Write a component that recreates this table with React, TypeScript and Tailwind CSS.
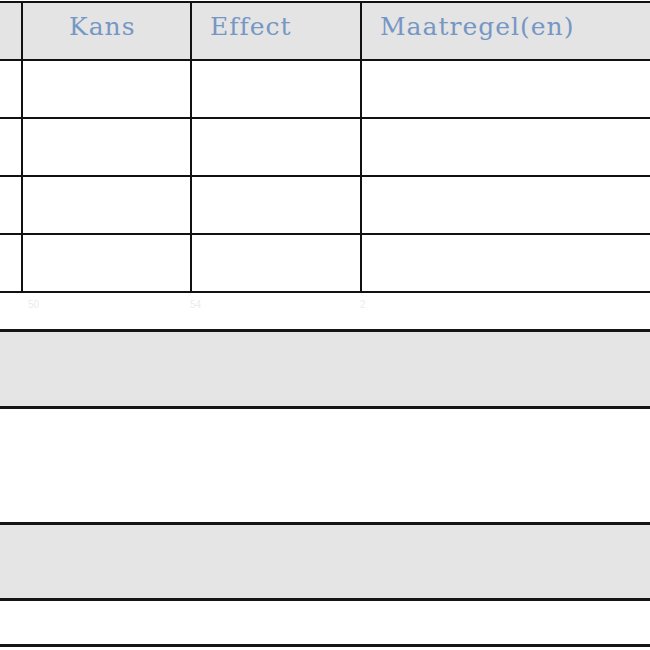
const headers = ["", "Kans", "Effect", "Maatregel(en)"];
const rows = [0, 1, 2, 3];

function HeaderCell({ label, index }: { label: string; index: number }) {
  return (
    <div
      className={
        "flex h-[56px] items-start bg-[#e4e4e4] pt-[9px] font-['DejaVu_Serif',serif] text-[25px] leading-[30px] tracking-[1px] text-[#7697c4] " +
        (index === 1 ? "pl-[46px]" : "pl-[18px]")
      }
    >
      {label}
    </div>
  );
}

export default function App() {
  return (
    <div className="h-[650px] w-[650px] overflow-hidden bg-white">
      {/* risk table */}
      <div className="mt-[1px] grid grid-cols-[21px_167px_168px_1fr] gap-[2px] border-y-2 border-[#111] bg-[#111]">
        {headers.map((h, i) => (
          <HeaderCell key={i} label={h} index={i} />
        ))}
        {rows.map((r) =>
          headers.map((_, c) => (
            <div key={`${r}-${c}`} className="h-[56px] bg-white" />
          ))
        )}
      </div>

      <div className="flex h-[36px] pl-[28px] pt-[4px] font-['Liberation_Sans',sans-serif] text-[10px] text-[#ececec]">
        <span className="w-[162px]">50</span>
        <span className="w-[170px]">54</span>
        <span>2</span>
      </div>

      <div className="h-[80px] border-y-[3px] border-[#151515] bg-[#e5e5e6]" />
      <div className="h-[113px] bg-white" />
      <div className="h-[79px] border-y-[3px] border-[#151515] bg-[#e6e5e6]" />
      <div className="h-[43px] bg-white" />
      <div className="h-[3px] bg-[#151515]" />
    </div>
  );
}
